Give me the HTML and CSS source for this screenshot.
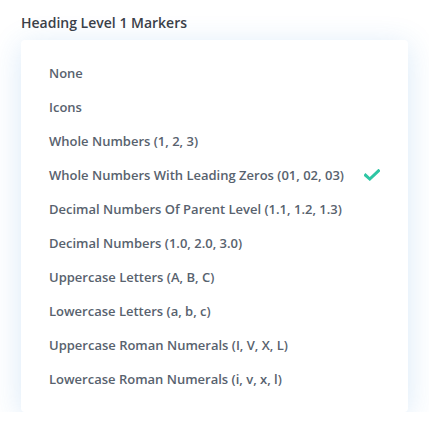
FILE: index.html
```html
<!DOCTYPE html>
<html>
<head>
<meta charset="utf-8">
<link rel="stylesheet" href="styles.css">
</head>
<body>
<div class="wrap">
  <h2 class="title">Heading Level 1 Markers</h2>
  <ul class="menu">
    <li class="item">None</li>
    <li class="item">Icons</li>
    <li class="item">Whole Numbers (1, 2, 3)</li>
    <li class="item selected"><span>Whole Numbers With Leading Zeros (01, 02, 03)</span>
      <svg class="check" width="16" height="12" viewBox="0 0 16 12"><path d="M1.5 6.2 L5.8 10 L14.5 1.8" fill="none" stroke="#2ec6a4" stroke-width="3" stroke-linecap="square" stroke-linejoin="miter"/></svg>
    </li>
    <li class="item">Decimal Numbers Of Parent Level (1.1, 1.2, 1.3)</li>
    <li class="item">Decimal Numbers (1.0, 2.0, 3.0)</li>
    <li class="item">Uppercase Letters (A, B, C)</li>
    <li class="item">Lowercase Letters (a, b, c)</li>
    <li class="item">Uppercase Roman Numerals (I, V, X, L)</li>
    <li class="item">Lowercase Roman Numerals (i, v, x, l)</li>
  </ul>
</div>
</body>
</html>
```
FILE: styles.css
```css
html, body {
  margin: 0;
  padding: 0;
  background: #ffffff;
}
body {
  font-family: "Open Sans", "Noto Sans", sans-serif;
}
.wrap {
  padding: 13px 21px 0 21px;
  width: 387px;
}
.title {
  margin: 0 0 7px 0;
  font-size: 14px;
  font-weight: 600;
  line-height: 20px;
  color: #3a4048;
}
.menu {
  list-style: none;
  margin: 0;
  padding: 16px 0;
  background: #ffffff;
  border-radius: 4px;
  box-shadow: 0 5px 30px rgba(43, 135, 218, 0.18);
}
.item {
  height: 34px;
  display: flex;
  align-items: center;
  padding-left: 28px;
  font-size: 13px;
  font-weight: 600;
  color: #58626e;
}
.check {
  margin-left: 20px;
}
```
